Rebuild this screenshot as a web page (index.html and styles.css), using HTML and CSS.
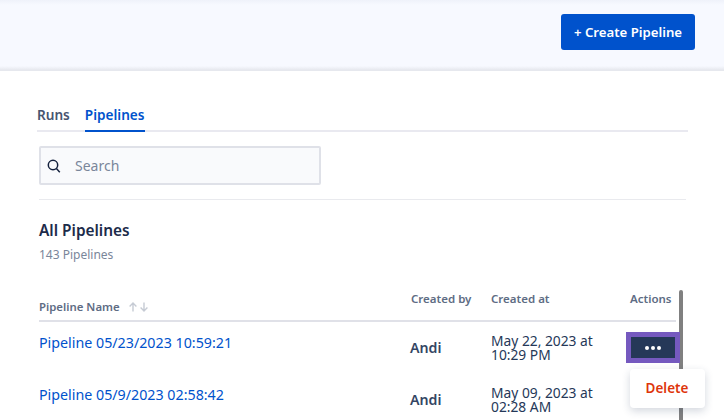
FILE: index.html
```html
<!DOCTYPE html>
<html lang="en">
<head>
<meta charset="utf-8">
<title>Pipelines</title>
<link rel="stylesheet" href="styles.css">
</head>
<body>
<header class="topbar">
  <button class="create-btn">+ Create Pipeline</button>
</header>
<main class="content">
  <nav class="tabs">
    <a class="tab">Runs</a>
    <a class="tab tab-active">Pipelines</a>
  </nav>
  <div class="search">
    <svg class="search-icon" width="14" height="14" viewBox="0 0 14 14" fill="none" stroke="#14213d" stroke-width="1.5"><circle cx="6" cy="6" r="4.7"/><path d="M9.4 9.6 12.800 13.200"/></svg>
    <span class="search-text">Search</span>
  </div>
  <hr class="divider">
  <h2 class="title">All Pipelines</h2>
  <p class="count">143 Pipelines</p>
  <div class="table">
    <div class="row head">
      <div class="th th-name">Pipeline Name
        <svg class="sort" width="22" height="10" viewBox="0 0 22 10" fill="none" stroke="#c6cbd4" stroke-width="1.4"><path d="M5 9.500V1M1.600 4.400 5 1l3.400 3.400M16 .5V9M12.600 5.600 16 9l3.400-3.400"/></svg>
      </div>
      <div class="th">Created by</div>
      <div class="th">Created at</div>
      <div class="th">Actions</div>
    </div>
    <div class="row body-row">
      <a class="link">Pipeline 05/23/2023 10:59:21</a>
      <div class="author">Andi</div>
      <div class="date">May 22, 2023 at<br>10:29 PM</div>
      <div class="action-cell">
        <button class="more"><span class="dot"></span><span class="dot"></span><span class="dot"></span></button>
      </div>
    </div>
    <div class="row body-row">
      <a class="link">Pipeline 05/9/2023 02:58:42</a>
      <div class="author">Andi</div>
      <div class="date">May 09, 2023 at<br>02:28 AM</div>
      <div></div>
    </div>
    <div class="scrollbar"></div>
    <div class="menu">Delete</div>
  </div>
</main>
</body>
</html>
```
FILE: styles.css
```css
* { box-sizing: border-box; }
html, body { margin: 0; height: 420px; overflow: hidden; background: #fff; }
body { font-family: "Noto Sans", "Liberation Sans", sans-serif; color: #253858; }

.topbar {
  height: 71px;
  display: flex;
  justify-content: flex-end;
  align-items: flex-start;
  padding: 14px 29px 0 0;
  background: linear-gradient(#eff2fa 0, #f7f9ff 5px, #f7f9ff 66px, #e6e8ee 70px, #e6e8ee 71px);
}
.create-btn {
  width: 134px;
  height: 36px;
  border: 0;
  border-radius: 3px;
  background: #0052cc;
  color: #fff;
  font: 600 13.2px "Noto Sans", sans-serif;
  padding: 0;
}

.content { padding: 0 36px 0 37px; }

.tabs {
  display: flex;
  gap: 15px;
  margin-top: 31px;
  height: 30px;
  border-bottom: 2px solid #e9e9f0;
}
.tab { font-size: 13.6px; font-weight: 600; color: #475570; height: 30px; line-height: 26px; }
.tab-active { color: #0052cc; border-bottom: 2px solid #0052cc; }

.search {
  display: flex;
  align-items: center;
  width: 282px;
  height: 39px;
  margin: 14px 0 0 2px;
  padding-left: 6px;
  background: #f9fafc;
  border: 2px solid #dfe1e8;
  border-radius: 2px;
}
.search-text { margin-left: 14px; font-size: 14px; color: #7a869a; }

.divider { height: 1px; margin: 14px 2px 0; border: 0; background: #e9eaee; }

.title { margin: 22px 0 0 2px; font-size: 15.4px; line-height: 18px; font-weight: 600; color: #1c2b4a; }
.count { margin: 8px 0 0 2px; font-size: 12px; line-height: 14px; color: #7a869a; }

.table { position: relative; margin: 0 0 0 2px; width: 637px; }
.row { display: grid; grid-template-columns: 372px 80px 139px 46px; }
.head { height: 60px; padding-top: 30px; border-bottom: 2px solid #e0e1e8; }
.th { font-size: 11.5px; font-weight: 600; color: #5e6c84; line-height: 14px; white-space: nowrap; }
.th-name { display: flex; align-items: flex-start; gap: 8px; padding-top: 8px; font-size: 11.4px; }
.sort { margin-top: 2px; }

.body-row { height: 52px; }
.link { margin-top: 12px; font-size: 14.25px; line-height: 18px; color: #0052cc; }
.author { margin-top: 17px; margin-left: -1px; font-size: 14.2px; line-height: 18px; font-weight: 600; color: #344563; }
.date { margin-top: 12px; font-size: 13.8px; line-height: 14px; color: #253858; white-space: nowrap; }

.action-cell { position: relative; }
.more {
  position: absolute;
  z-index: 2;
  left: -4.500px;
  top: 10px;
  width: 54px;
  height: 31px;
  padding: 0;
  display: flex;
  gap: 2px;
  align-items: center;
  justify-content: center;
  background: #253858;
  border: 0;
  box-shadow: inset 0 0 0 5px #7559bf;
}
.dot { width: 4px; height: 4px; border-radius: 50%; background: #fff; }

.scrollbar {
  position: absolute;
  left: 640px;
  top: 28px;
  width: 4px;
  height: 130px;
  background: #808080;
  border-radius: 2px 2px 0 0;
}
.menu {
  position: absolute;
  left: 591px;
  top: 107px;
  width: 75px;
  height: 39px;
  z-index: 3;
  padding-right: 1px;
  text-align: center;
  line-height: 38px;
  font-size: 13.5px;
  font-weight: 600;
  color: #de350b;
  background: #fff;
  border-radius: 4px;
  box-shadow: 0 3px 8px rgba(37, 56, 88, 0.2);
}
```
